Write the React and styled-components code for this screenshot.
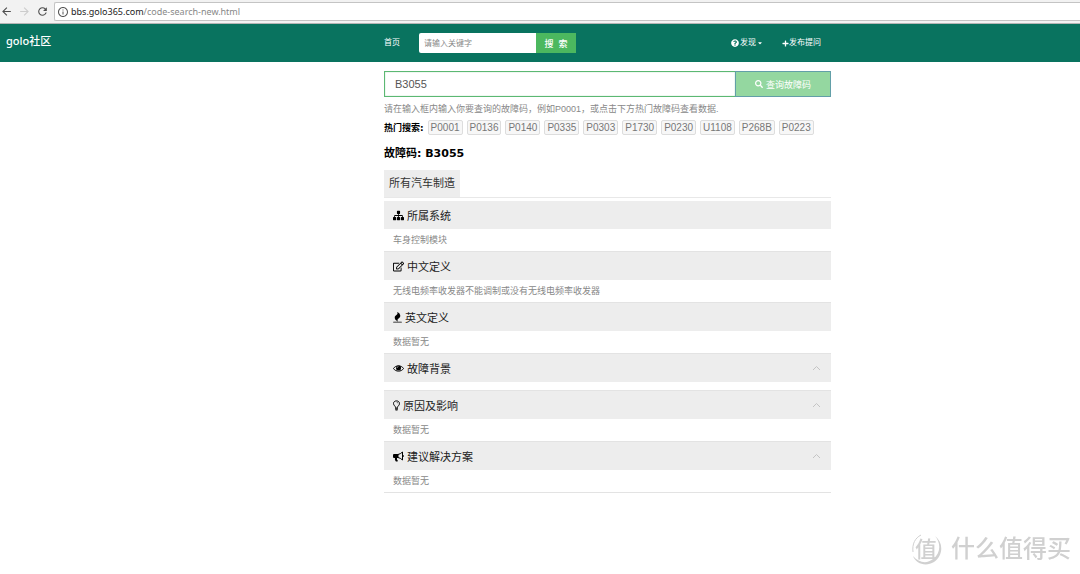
import React, { useState } from 'react';
import styled, { createGlobalStyle } from 'styled-components';
import { FaPlus, FaSearch, FaQuestionCircle, FaCaretDown, FaRegEdit } from 'react-icons/fa';
import { MdArrowBack, MdArrowForward, MdRefresh, MdInfoOutline } from 'react-icons/md';

const GlobalStyle = createGlobalStyle`
  * {
    box-sizing: border-box;
  }
  body {
    margin: 0;
    background: #fff;
    color: #333;
    font-family: 'Liberation Sans', 'Noto Sans CJK SC', sans-serif;
    font-size: 9px;
  }
  button, input {
    font-family: inherit;
    margin: 0;
  }
  svg {
    flex: none;
  }
`;

const BrowserBar = styled.div`
  display: flex;
  align-items: center;
  height: 24px;
  background: #f2f2f2;
  border-bottom: 1px solid #b5b5b5;
`;

const BrowserButton = styled.button`
  display: flex;
  width: 18px;
  padding: 0;
  border: 0;
  background: none;
  color: ${({ disabled }) => (disabled ? '#ccc' : '#4d4d4d')};
  font-size: 13px;
`;

const Address = styled.div`
  display: flex;
  flex: 1;
  align-items: center;
  gap: 2px;
  height: 19px;
  padding-left: 2px;
  border: 1px solid #c4c4c4;
  border-right: 0;
  border-radius: 2px 0 0 2px;
  background: #fff;
  color: #888;
  font-family: 'Noto Sans', sans-serif;
  font-size: 9px;
  b {
    color: #222;
    font-weight: 400;
  }
  svg {
    color: #555;
    font-size: 12px;
  }
`;

const Columns = styled.div`
  display: grid;
  grid-template-columns: 384fr 447fr 249fr;
`;

const Header = styled(Columns)`
  align-items: center;
  height: 38px;
  background: #09735f;
`;

const Brand = styled.a`
  padding: 0 0 4px 6px;
  color: #fff;
  font-family: 'Noto Sans', 'Noto Sans CJK SC', sans-serif;
  font-size: 11px;
  font-weight: 500;
  line-height: 16px;
  text-decoration: none;
`;

const Nav = styled.nav`
  display: flex;
  align-items: center;
`;

const NavLink = styled.a`
  display: flex;
  align-items: center;
  gap: ${({ $gap }) => $gap || 0}px;
  color: #fff;
  font-size: 8px;
  line-height: 12px;
  text-decoration: none;
`;

const SearchForm = styled.form`
  display: flex;
  height: 20px;
  margin: 0 auto 0 19px;
`;

const SearchInput = styled.input`
  width: 117px;
  padding: 0 5px;
  border: 0;
  border-radius: 2px 0 0 2px;
  background: #fff;
  font-size: 8px;
  &::placeholder {
    color: #888;
  }
`;

const SearchButton = styled.button`
  width: 40px;
  padding: 0;
  border: 0;
  background: #4cb85f;
  color: #fff;
  font-size: 9px;
  font-weight: 500;
  white-space: pre;
`;

const NavRight = styled.div`
  display: flex;
  gap: 19px;
  padding-right: 10px;
`;

const Main = styled.main`
  grid-column: 2;
  padding-top: 9px;
`;

const CodeForm = styled.form`
  display: flex;
  height: 26px;
`;

const CodeInput = styled.input`
  flex: 1;
  min-width: 0;
  padding: 0 10px;
  border: 1px solid #5cb873;
  border-right: 0;
  outline: 0;
  color: #555;
  font-size: 11px;
  box-shadow: inset 0 0 1px #5cb873;
`;

const CodeButton = styled.button`
  display: flex;
  align-items: center;
  justify-content: center;
  gap: 3px;
  width: 96px;
  padding: 0;
  border: 1px solid #629fa8;
  background: #94d7a0;
  color: #fff;
  font-size: 9px;
`;

const Hint = styled.p`
  margin: 6px 0 4px;
  color: #888;
  line-height: 13px;
`;

const HotSearch = styled.div`
  display: flex;
  flex-wrap: wrap;
  align-items: center;
  gap: 4px;
`;

const HotLabel = styled.b`
  color: #000;
  font-family: 'DejaVu Sans', 'Noto Sans CJK SC', sans-serif;
  line-height: 14px;
`;

const Chip = styled.a`
  padding: 0 2px;
  border: 1px solid #ddd;
  border-radius: 2px;
  background: #f7f7f7;
  color: #777;
  font-size: 10px;
  line-height: 13px;
  text-decoration: none;
`;

const Title = styled.h1`
  margin: 11px 0 8px;
  color: #000;
  font-family: 'DejaVu Sans', 'Noto Sans CJK SC', sans-serif;
  font-size: 11px;
  line-height: 16px;
`;

const Tabs = styled.div`
  display: flex;
  margin-bottom: 3px;
  border-bottom: 1px solid #e8e8e8;
`;

const Tab = styled.button`
  padding: 0 5px;
  border: 0;
  background: #ededed;
  color: #333;
  font-size: 11px;
  line-height: 27px;
`;

const SectionTitle = styled.h2`
  display: flex;
  align-items: center;
  gap: 3px;
  height: 28px;
  margin: 0;
  padding: 0 10px 0 9px;
  background: #ededed;
  color: #222;
  font-size: 11px;
  font-weight: 400;
  svg {
    color: #000;
  }
`;

const Toggle = styled.button`
  display: flex;
  margin-left: auto;
  padding: 0;
  border: 0;
  background: none;
`;

const SectionBody = styled.p`
  min-height: 9px;
  margin: 0;
  padding: ${({ $empty }) => ($empty ? '0' : '5px 9px')};
  border-bottom: 1px solid #e3e3e3;
  color: #888;
  line-height: 12px;
`;

const Watermark = styled.div`
  position: fixed;
  right: 9px;
  bottom: 8px;
  display: flex;
  align-items: center;
  gap: 8px;
  color: #d0d0d0;
  font-size: 24px;
  font-weight: 500;
  line-height: 34px;
`;

const Seal = styled.svg`
  width: 32px;
  height: 34px;
  text {
    font-size: 22px;
    font-weight: 500;
  }
`;

const SitemapIcon = () => (
  <svg width="11" height="11" viewBox="0 0 1792 1792" fill="currentColor">
    <path d="M1792 1248v320q0 40-28 68t-68 28h-320q-40 0-68-28t-28-68v-320q0-40 28-68t68-28h96v-192h-512v192h96q40 0 68 28t28 68v320q0 40-28 68t-68 28h-320q-40 0-68-28t-28-68v-320q0-40 28-68t68-28h96v-192h-512v192h96q40 0 68 28t28 68v320q0 40-28 68t-68 28h-320q-40 0-68-28t-28-68v-320q0-40 28-68t68-28h96v-192q0-52 38-90t90-38h512v-192h-96q-40 0-68-28t-28-68v-320q0-40 28-68t68-28h320q40 0 68 28t28 68v320q0 40-28 68t-68 28h-96v192h512q52 0 90 38t38 90v192h96q40 0 68 28t28 68z" />
  </svg>
);

const FireIcon = () => (
  <svg width="9" height="11" viewBox="0 0 1408 1792" fill="currentColor">
    <path d="M1408 1632v64q0 13-9.500 22.500t-22.500 9.500h-1344q-13 0-22.500-9.500t-9.500-22.500v-64q0-13 9.500-22.500t22.500-9.500h1344q13 0 22.500 9.500t9.500 22.500zM1152 640q0 78-24.500 144t-64 112.500-87.500 88-96 77.500-87.500 72-64 81.500-24.500 96.500q0 96 67 224l-4-1 1 1q-90-41-160-83t-138.500-100-113.500-122.500-72.500-150.500-27.500-184q0-78 24.500-144t64-112.500 87.500-88 96-77.500 87.500-72 64-81.500 24.500-96.500q0-94-66-224l3 1-1-1q90 41 160 83t138.500 100 113.500 122.500 72.500 150.500 27.500 184z" />
  </svg>
);

const EyeIcon = () => (
  <svg width="11" height="11" viewBox="0 0 22 22" fill="none" stroke="currentColor">
    <path d="M1 11C5 4 17 4 21 11C17 18 5 18 1 11Z" strokeWidth="2" />
    <circle cx="11" cy="10" r="5" fill="currentColor" stroke="none" />
    <path d="M8 10q0-3 3-3" stroke="#ededed" strokeWidth="1" />
  </svg>
);

const BulbIcon = () => (
  <svg width="7" height="11" viewBox="0 0 14 22" fill="none" stroke="currentColor" strokeWidth="2">
    <path d="M5 15C5 12 1 11 1 7C1 0 13 0 13 7C13 11 9 12 9 15" />
    <path d="M7 4q3 0 3 3" strokeWidth="1" />
    <path d="M4 16h6M4 18h6M5 20h4" />
  </svg>
);

const HornIcon = () => (
  <svg width="11" height="11" viewBox="0 0 22 22" fill="currentColor">
    <path d="M2 6h9v8H8q-1 3 2 6q-3 2-5 0q-2-3-1-6H2q-2 0-2-2V8q0-2 2-2z" />
    <path d="M10 7q5-1 9-5v16q-4-4-9-5" fill="none" stroke="currentColor" strokeWidth="2" />
    <path d="M19 8q3 0 3 2t-3 2z" />
  </svg>
);

const Chevron = ({ open }) => (
  <svg width="9" height="6" viewBox="0 0 9 6" fill="none" stroke="#c4c4c4">
    <path d={open ? 'M1 5l3.500-3.500L8 5' : 'M1 1l3.500 3.500L8 1'} />
  </svg>
);

const codes = ['P0001', 'P0136', 'P0140', 'P0335', 'P0303', 'P1730', 'P0230', 'U1108', 'P268B', 'P0223'];

const sections = [
  { title: '所属系统', icon: <SitemapIcon />, text: '车身控制模块' },
  { title: '中文定义', icon: <FaRegEdit size={11} />, text: '无线电频率收发器不能调制或没有无线电频率收发器' },
  { title: '英文定义', icon: <FireIcon />, text: '数据暂无' },
  { title: '故障背景', icon: <EyeIcon />, text: '', toggle: true },
  { title: '原因及影响', icon: <BulbIcon />, text: '数据暂无', toggle: true },
  { title: '建议解决方案', icon: <HornIcon />, text: '数据暂无', toggle: true },
];

const Section = ({ title, icon, text, toggle }) => {
  const [open, setOpen] = useState(true);
  return (
    <section>
      <SectionTitle>
        {icon}
        {title}
        {toggle && (
          <Toggle type="button" aria-label={title} aria-expanded={open} onClick={() => setOpen(!open)}>
            <Chevron open={open} />
          </Toggle>
        )}
      </SectionTitle>
      {open && <SectionBody $empty={!text}>{text}</SectionBody>}
    </section>
  );
};

const App = () => {
  const [code, setCode] = useState('B3055');
  const stop = (e) => e.preventDefault();

  return (
    <>
      <GlobalStyle />
      <BrowserBar>
        <BrowserButton aria-label="后退"><MdArrowBack /></BrowserButton>
        <BrowserButton aria-label="前进" disabled><MdArrowForward /></BrowserButton>
        <BrowserButton aria-label="刷新"><MdRefresh /></BrowserButton>
        <Address>
          <MdInfoOutline />
          <span><b>bbs.golo365.com</b>/code-search-new.html</span>
        </Address>
      </BrowserBar>
      <Header as="header">
        <Brand href="#">golo社区</Brand>
        <Nav>
          <NavLink href="#">首页</NavLink>
          <SearchForm onSubmit={stop}>
            <SearchInput aria-label="关键字" placeholder="请输入关键字" />
            <SearchButton>搜  索</SearchButton>
          </SearchForm>
          <NavRight>
            <NavLink href="#" $gap={1}>
              <FaQuestionCircle />
              发现
              <FaCaretDown size={6} />
            </NavLink>
            <NavLink href="#">
              <FaPlus size={7} />
              发布提问
            </NavLink>
          </NavRight>
        </Nav>
      </Header>
      <Columns>
        <Main>
          <CodeForm onSubmit={stop}>
            <CodeInput aria-label="故障码" value={code} onChange={(e) => setCode(e.target.value)} />
            <CodeButton>
              <FaSearch size={8} />
              查询故障码
            </CodeButton>
          </CodeForm>
          <Hint>请在输入框内输入你要查询的故障码，例如P0001，或点击下方热门故障码查看数据.</Hint>
          <HotSearch>
            <HotLabel>热门搜索:</HotLabel>
            {codes.map((item) => (
              <Chip key={item} href="#">{item}</Chip>
            ))}
          </HotSearch>
          <Title>故障码: B3055</Title>
          <Tabs role="tablist">
            <Tab role="tab" aria-selected="true">所有汽车制造</Tab>
          </Tabs>
          {sections.map((section) => (
            <Section key={section.title} {...section} />
          ))}
        </Main>
      </Columns>
      <Watermark>
        <Seal viewBox="0 0 32 34">
          <path d="M24 4C33 11 32 24 23 30C15 35 5 32 2 24C8 31 16 32 22 27C30 21 30 11 24 4Z" fill="currentColor" />
          <path d="M2 20C1 12 4 6 10 3" fill="none" stroke="currentColor" />
          <text x="4" y="25" fill="currentColor">值</text>
        </Seal>
        <span>什么值得买</span>
      </Watermark>
    </>
  );
};

export default App;
